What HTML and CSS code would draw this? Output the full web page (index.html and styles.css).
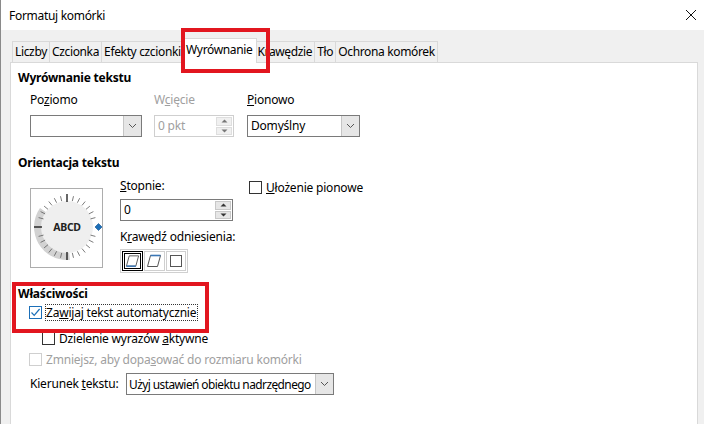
FILE: index.html
```html
<!DOCTYPE html>
<html lang="pl">
<head>
<meta charset="utf-8">
<title>Formatuj komórki</title>
<link rel="stylesheet" href="styles.css">
</head>
<body>
<div class="win">
  <div class="titlebar">
    <span class="title">Formatuj komórki</span>
    <svg class="close" width="12" height="12" viewBox="0 0 12 12"><path d="M1 1L11 11M11 1L1 11" stroke="#111" stroke-width="1"/></svg>
  </div>
  <div class="client">
    <div class="tabs">
      <div class="tab t-liczby">Liczby</div>
      <div class="tab t-czc">Czcionka</div>
      <div class="tab t-efekty">Efekty czcionki</div>
      <div class="tab active">Wyrównanie</div>
      <div class="tab t-kraw">Krawędzie</div>
      <div class="tab t-tlo">Tło</div>
      <div class="tab t-ochr">Ochrona komórek</div>
    </div>
    <div class="panel">
      <div class="grp-title">Wyrównanie tekstu</div>
      <div class="align-row">
        <div class="field f-poz">
          <div class="lbl">Po<u>z</u>iomo</div>
          <div class="combo"><span class="val"></span><span class="drop"><svg width="9" height="6" viewBox="0 0 9 6"><path d="M1 1L4.5 4.5L8 1" fill="none" stroke="#555"/></svg></span></div>
        </div>
        <div class="field f-wc">
          <div class="lbl dis">W<u>c</u>ięcie</div>
          <div class="spin dis"><span class="val">0 pkt</span><span class="spbtns"><span class="sp"><svg width="7" height="4" viewBox="0 0 7 4"><path d="M0.5 3.5L3.5 0.5L6.5 3.5Z" fill="#777"/></svg></span><span class="sp"><svg width="7" height="4" viewBox="0 0 7 4"><path d="M0.5 0.5L3.5 3.5L6.5 0.5Z" fill="#777"/></svg></span></span></div>
        </div>
        <div class="field f-pion">
          <div class="lbl"><u>P</u>ionowo</div>
          <div class="combo"><span class="val">Domyślny</span><span class="drop"><svg width="9" height="6" viewBox="0 0 9 6"><path d="M1 1L4.5 4.5L8 1" fill="none" stroke="#555"/></svg></span></div>
        </div>
      </div>

      <div class="grp-title g2">Orientacja tekstu</div>
      <div class="orient-row">
        <div class="dial">
          <svg width="72" height="78" viewBox="0 0 72 78">
            <circle cx="36" cy="38" r="33" fill="#ffffff"/>
            <path d="M36 38 L9.0 19.1 A33 33 0 0 0 38.9 70.9 Z" fill="#d2d2d2"/>
            <circle cx="36" cy="38" r="26" fill="#efefef"/>
            <g stroke="#5a5a5a" stroke-width="0.8">
              <line x1="42.5" y1="7.2" x2="41.3" y2="12.1"/>
              <line x1="48.7" y1="9.2" x2="46.4" y2="13.7"/>
              <line x1="54.2" y1="12.5" x2="51.0" y2="16.4"/>
              <line x1="58.9" y1="17.1" x2="55.0" y2="20.3"/>
              <line x1="62.4" y1="22.6" x2="57.9" y2="24.9"/>
              <line x1="64.4" y1="28.6" x2="59.5" y2="29.9"/>
              <line x1="64.4" y1="47.4" x2="59.5" y2="46.1"/>
              <line x1="62.4" y1="53.4" x2="57.9" y2="51.1"/>
              <line x1="58.9" y1="58.9" x2="55.0" y2="55.7"/>
              <line x1="54.2" y1="63.5" x2="51.0" y2="59.6"/>
              <line x1="48.7" y1="66.8" x2="46.4" y2="62.3"/>
              <line x1="42.5" y1="68.8" x2="41.3" y2="63.9"/>
              <line x1="29.5" y1="68.8" x2="30.7" y2="63.9"/>
              <line x1="23.3" y1="66.8" x2="25.6" y2="62.3"/>
              <line x1="17.8" y1="63.5" x2="21.0" y2="59.6"/>
              <line x1="13.1" y1="58.9" x2="17.0" y2="55.7"/>
              <line x1="9.6" y1="53.4" x2="14.1" y2="51.1"/>
              <line x1="7.6" y1="47.4" x2="12.5" y2="46.1"/>
              <line x1="7.6" y1="28.6" x2="12.5" y2="29.9"/>
              <line x1="9.6" y1="22.6" x2="14.1" y2="24.9"/>
              <line x1="13.1" y1="17.1" x2="17.0" y2="20.3"/>
              <line x1="17.8" y1="12.5" x2="21.0" y2="16.4"/>
              <line x1="23.3" y1="9.2" x2="25.6" y2="13.7"/>
              <line x1="29.5" y1="7.2" x2="30.7" y2="12.1"/>
            </g>
            <g stroke="#000" stroke-width="1.2">
              <line x1="36" y1="5" x2="36" y2="13"/>
              <line x1="36" y1="63" x2="36" y2="71"/>
              <line x1="3" y1="38" x2="11" y2="38"/>
            </g>
            <path d="M67.5 34.5 L71 38 L67.5 41.5 L64 38 Z" fill="#1c6fb8" stroke="#0b4f8f" stroke-width="0.6"/>
            <text x="36" y="42" text-anchor="middle" class="abcd">ABCD</text>
          </svg>
        </div>
        <div class="orient-mid">
          <div class="lbl"><u>S</u>topnie:</div>
          <div class="spin deg"><span class="val">0</span><span class="spbtns"><span class="sp"><svg width="7" height="4" viewBox="0 0 7 4"><path d="M0.5 3.5L3.5 0.5L6.5 3.5Z" fill="#333"/></svg></span><span class="sp"><svg width="7" height="4" viewBox="0 0 7 4"><path d="M0.5 0.5L3.5 3.5L6.5 0.5Z" fill="#333"/></svg></span></span></div>
          <div class="lbl l-kraw">K<u>r</u>awędź odniesienia:</div>
          <div class="toggles">
            <span class="tg sel"><svg width="16" height="14" viewBox="0 0 16 14"><path d="M4.5 1.5H14.5L11.5 12.5H1.5Z" fill="none" stroke="#555"/><path d="M1.5 12.5H11.5" stroke="#3a76b5" stroke-width="1.6"/></svg></span>
            <span class="tg"><svg width="16" height="14" viewBox="0 0 16 14"><path d="M4.5 1.5H14.5L11.5 12.5H1.5Z" fill="none" stroke="#555"/><path d="M4.5 1.5H14.5" stroke="#3a76b5" stroke-width="1.6"/></svg></span>
            <span class="tg"><svg width="14" height="14" viewBox="0 0 14 14"><rect x="1.5" y="1.5" width="11" height="11" fill="none" stroke="#555"/></svg></span>
          </div>
        </div>
        <div class="orient-right">
          <label class="chk"><span class="box"></span><span><u>U</u>łożenie pionowe</span></label>
        </div>
      </div>

      <div class="grp-title g3">Właściwości</div>
      <label class="chk c-wrap"><span class="box checked"><svg width="11" height="11" viewBox="0 0 11 11"><path d="M1.5 5.5L4.2 8.3L9.6 2" fill="none" stroke="#1c6fb8" stroke-width="1.2"/></svg></span><span class="focus">Za<u>w</u>ijaj tekst automatycznie</span></label>
      <label class="chk c-hyph"><span class="box"></span><span>Dzielenie wyrazów <u>a</u>ktywne</span></label>
      <label class="chk c-shrink dis"><span class="box"></span><span>Zmniejsz, aby dopa<u>s</u>ować do rozmiaru komórki</span></label>
      <div class="dir-row">
        <span class="lbl">Kierunek <u>t</u>ekstu:</span>
        <div class="combo c-dir"><span class="val">Użyj ustawień obiektu nadrzędnego</span><span class="drop"><svg width="9" height="6" viewBox="0 0 9 6"><path d="M1 1L4.5 4.5L8 1" fill="none" stroke="#555"/></svg></span></div>
      </div>
    </div>
    <div class="red red-tab"></div>
    <div class="red red-props"></div>
  </div>
</div>
</body>
</html>
```

FILE: styles.css
```css
* { box-sizing: border-box; }
html, body { margin: 0; padding: 0; }
body {
  width: 704px;
  height: 424px;
  overflow: hidden;
  background: #f0f0f0;
  font-family: "Noto Sans", "Open Sans", sans-serif;
  font-size: 12px;
  color: #000;
}
u { text-decoration: underline; text-underline-offset: 1px; }
.win {
  width: 704px;
  height: 424px;
  display: flex;
  flex-direction: column;
  border-left: 1px solid #8a8a8a;
  overflow: hidden;
}
.titlebar {
  height: 30px;
  background: #fff;
  display: flex;
  align-items: center;
  justify-content: space-between;
  padding: 0 7px 0 8px;
  flex: none;
}
.title { font-size: 12px; letter-spacing: -0.3px; }
.close { margin-top: -1px; }
.client {
  position: relative;
  flex: 1;
  background: #f0f0f0;
  padding: 11px 6px 0 9px;
  display: flex;
  flex-direction: column;
}
.tabs {
  display: flex;
  height: 21px;
  align-items: flex-end;
  padding-left: 2px;
  position: relative;
  z-index: 2;
}
.tab {
  height: 21px;
  border: 1px solid #d9d9d9;
  border-bottom: none;
  margin-right: -1px;
  background: #f0f0f0;
  padding: 0 2px;
  line-height: 19px;
  white-space: nowrap;
  overflow: hidden;
  letter-spacing: -0.35px;
}
.t-efekty { width: 83px; }
.tab.active {
  height: 25px;
  margin: 0 -3px 0 -2px;
  padding: 0 4px;
  background: #fff;
  border-color: #d9d9d9;
  position: relative;
  z-index: 3;
  line-height: 22px;
  margin-bottom: -1px;
}
.panel {
  flex: 1;
  background: #fff;
  border: 1px solid #d9d9d9;
  padding: 6px 0 0 7px;
  letter-spacing: -0.2px;
  margin-bottom: -6px;
}
.grp-title { font-weight: bold; height: 18px; line-height: 18px; }
.g2 { margin-top: 17px; }
.g3 { margin-top: 12px; }
.align-row { display: flex; padding-left: 12px; margin-top: 4px; }
.field { display: flex; flex-direction: column; }
.lbl { line-height: 18px; height: 18px; }
.lbl.dis, .dis { color: #a0a0a0; }
.f-poz { width: 124px; }
.f-wc { width: 93px; }
.field .combo, .field .spin { margin-top: 6px; }
.combo, .spin {
  height: 22px;
  border: 1px solid #7a7a7a;
  display: flex;
  align-items: stretch;
  background: #fff;
}
.f-poz .combo { width: 112px; }
.f-pion .combo { width: 113px; }
.f-wc .spin { width: 80px; border-color: #cfcfcf; }
.val { flex: 1; padding-left: 3px; line-height: 20px; white-space: nowrap; overflow: hidden; }
.drop {
  width: 18px;
  background: #e6e6e6;
  border-left: 1px solid #c5c5c5;
  display: flex;
  align-items: center;
  justify-content: center;
  flex: none;
}
.spbtns { width: 17px; display: flex; flex-direction: column; padding: 1px 1px 1px 0; gap: 1px; }
.sp {
  flex: 1;
  background: #e6e6e6;
  border: 1px solid #c8c8c8;
  display: flex;
  align-items: center;
  justify-content: center;
}
.spin.dis .sp { background: #f0f0f0; border-color: #dedede; }
.orient-row { display: flex; padding-left: 12px; margin-top: 16px; }
.dial {
  width: 73px;
  height: 80px;
  border: 1px solid #adadad;
  background: #fff;
  flex: none;
}
.dial svg { display: block; margin-top: 0; }
.abcd { font-family: "Noto Sans", sans-serif; font-size: 10.5px; font-weight: bold; letter-spacing: -0.3px; fill: #222; }
.orient-mid { margin-left: 17px; width: 129px; margin-top: -11px; }
.spin.deg { width: 113px; margin-top: 4px; }
.l-kraw { margin-top: 7px; }
.toggles {
  display: flex;
  margin-top: 3px;
  width: 68px;
  height: 24px;
  border: 1px solid #d0d0d0;
  padding: 1px;
  gap: 1px;
}
.tg {
  width: 21px;
  height: 20px;
  border: 1px solid #cfcfcf;
  display: flex;
  align-items: center;
  justify-content: center;
  background: #fff;
}
.tg.sel { border: 3px double #000; }
.orient-right { margin-top: -10px; }
.chk { display: flex; align-items: center; height: 18px; }
.box {
  width: 13px;
  height: 13px;
  border: 1px solid #333;
  background: #fff;
  margin-right: 4px;
  flex: none;
  display: flex;
  align-items: center;
  justify-content: center;
}
.box.checked { border-color: #1c6fb8; }
.c-wrap { margin-left: 11px; margin-top: 0; height: 19px; }
.focus { outline: 1px dotted #333; outline-offset: 0; line-height: 15px; padding: 0 1px 0 0; }
.c-hyph { margin-left: 24px; margin-top: 7px; }
.c-shrink { margin-left: 11px; margin-top: 3px; }
.c-shrink .box { border-color: #cfcfcf; }
.dir-row { display: flex; align-items: center; margin-left: 12px; margin-top: 5px; }
.dir-row .lbl { width: 96px; }
.c-dir { width: 208px; }
.c-dir .val { letter-spacing: -0.55px; font-size: 11.9px; padding-left: 2px; }
.red {
  position: absolute;
  border: 4px solid #e2161f;
  z-index: 5;
  pointer-events: none;
}
.red-tab { left: 180px; top: -2px; width: 89px; height: 45px; }
.red-props { left: 11px; top: 252px; width: 197px; height: 51px; }
```
